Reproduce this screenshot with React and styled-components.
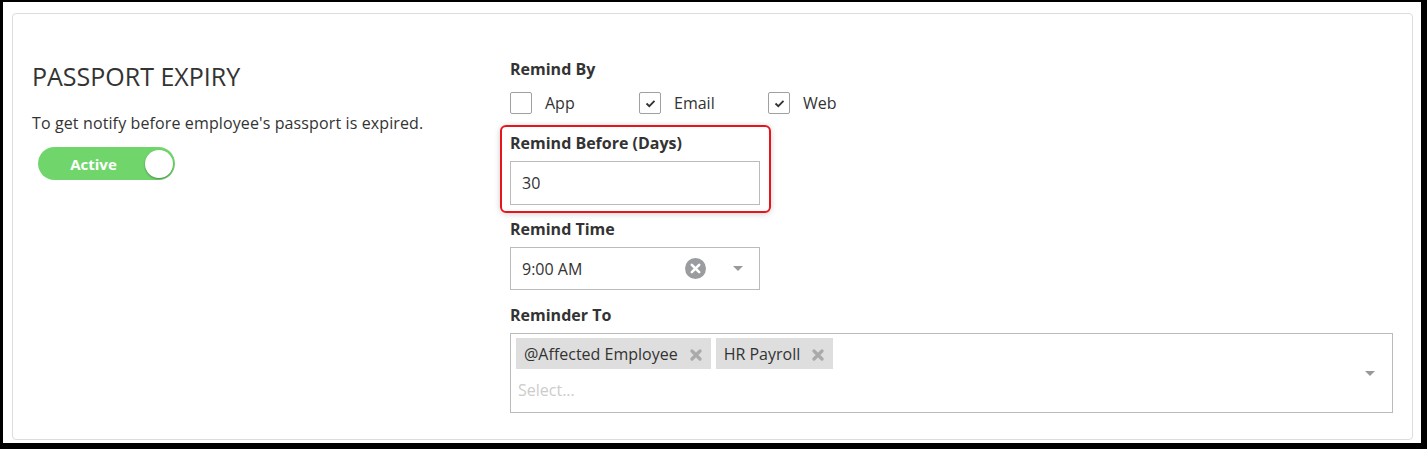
import React from 'react'
import styled, { createGlobalStyle } from 'styled-components'

const GlobalStyle = createGlobalStyle`
  html, body {
    margin: 0;
    padding: 0;
    background: #fff;
  }
  body {
    font-family: 'Open Sans', 'Liberation Sans', sans-serif;
    color: #333;
  }
  * {
    box-sizing: border-box;
  }
`

////////Layout///////////
const Frame = styled.div`
  width: 1427px;
  height: 449px;
  border-style: solid;
  border-color: #000;
  border-width: 2px 6px 6px 3px;
  padding: 11px 8px 3px 9px;
  background: #fff;
`
const Card = styled.section`
  height: 100%;
  border: 1px solid #ddd;
  border-radius: 4px;
  display: grid;
  grid-template-columns: 478px 1fr;
  padding: 44px 19px 0 19px;
`
const Intro = styled.div`
  display: flex;
  flex-direction: column;
  align-items: flex-start;
`
const Title = styled.h2`
  margin: 2px 0 0;
  font-size: 25px;
  font-weight: 400;
  line-height: 32px;
  text-transform: uppercase;
  color: #333;
`
const Description = styled.p`
  margin: 20px 0 0;
  font-size: 16px;
  line-height: 22px;
  letter-spacing: 0.12px;
  color: #333;
`
const Settings = styled.div`
  display: flex;
  flex-direction: column;
  align-items: flex-start;
`
const Field = styled.div`
  display: flex;
  flex-direction: column;
  align-items: flex-start;
  width: ${({ wide }) => (wide ? '100%' : '250px')};
  margin-top: ${({ top }) => top || 0}px;
`
const Highlight = styled.div`
  margin: 11px 0 0 -10px;
  padding: 5px 9px 6px 8px;
  border: 2px solid #e8141b;
  border-radius: 6px;
  box-shadow: 0 1px 6px rgba(0, 0, 0, 0.18);
`
const Label = styled.label`
  display: block;
  font-size: 16px;
  font-weight: 700;
  line-height: 22px;
  color: #333;
`

////////Toggle///////////
const Toggle = styled.div`
  margin: 13px 0 0 6px;
  width: 137px;
  height: 33px;
  border-radius: 17px;
  background: #70d66b;
  display: flex;
  align-items: center;
  padding: 0 2px 0 0;
`
const ToggleText = styled.span`
  flex: 1;
  text-align: center;
  color: #fff;
  font-size: 15px;
  font-weight: 700;
  padding-left: 4px;
`
const Knob = styled.span`
  width: 28px;
  height: 28px;
  border-radius: 50%;
  background: #fff;
  box-shadow: 0 1px 2px rgba(0, 0, 0, 0.35);
`

////////Checkboxes///////////
const CheckRow = styled.div`
  display: flex;
  margin-top: 12px;
`
const CheckItem = styled.label`
  display: flex;
  align-items: center;
  width: 129px;
  font-size: 16px;
  line-height: 22px;
  color: #333;
`
const Box = styled.span`
  width: 22px;
  height: 22px;
  border: 1px solid #a0a0a0;
  border-radius: 2px;
  margin-right: 13px;
  display: flex;
  align-items: center;
  justify-content: center;
  background: #fff;
`

////////Inputs///////////
const Input = styled.div`
  margin-top: 7px;
  width: 250px;
  height: ${({ h }) => h || 44}px;
  border: 1px solid #bbb;
  display: flex;
  align-items: center;
  padding: 0 11px;
  font-size: 16px;
  color: #333;
`
const Select = styled(Input)`
  padding-right: 16px;
`
const SelectValue = styled.span`
  flex: 1;
`
const Caret = styled.span`
  width: 0;
  height: 0;
  border-left: 5px solid transparent;
  border-right: 5px solid transparent;
  border-top: 5px solid #999;
  margin-left: ${({ gap }) => gap || 0}px;
`
const MultiBox = styled.div`
  margin-top: 7px;
  width: 100%;
  height: 80px;
  border: 1px solid #bbb;
  display: flex;
  align-items: center;
  padding: 0 17px 0 5px;
`
const MultiInner = styled.div`
  flex: 1;
  display: flex;
  flex-direction: column;
  align-self: stretch;
  padding-top: 4px;
`
const Chips = styled.div`
  display: flex;
  gap: 5px;
`
const Chip = styled.span`
  display: flex;
  align-items: center;
  height: 31px;
  padding: 0 9px 0 8px;
  background: #dedede;
  font-size: 16px;
  color: #333;
  svg {
    margin-left: 12px;
    margin-top: 2px;
  }
`
const Placeholder = styled.span`
  margin-top: 10px;
  padding-left: 2px;
  font-size: 16px;
  line-height: 22px;
  color: #ccc;
`

const Check = () => (
  <svg width="11" height="9" viewBox="0 0 11 9">
    <path d="M1.5 4.5 L4.3 7.2 L9.5 1.8" fill="none" stroke="#333" strokeWidth="1.8" />
  </svg>
)

const ClearIcon = () => (
  <svg width="21" height="21" viewBox="0 0 21 21">
    <circle cx="10.5" cy="10.5" r="10.5" fill="#9a9ca0" />
    <path d="M6.8 6.8 L14.2 14.2 M14.2 6.8 L6.8 14.2" stroke="#fff" strokeWidth="2.6" strokeLinecap="round" />
  </svg>
)

const RemoveIcon = () => (
  <svg width="12" height="12" viewBox="0 0 12 12">
    <path d="M2 2 L10 10 M10 2 L2 10" stroke="#aaa" strokeWidth="3.2" strokeLinecap="round" />
  </svg>
)

const App = () => {
  const channels = [
    { name: 'App', checked: false },
    { name: 'Email', checked: true },
    { name: 'Web', checked: true },
  ]
  const recipients = ['@Affected Employee', 'HR Payroll']

  return (
    <>
      <GlobalStyle />
      <Frame>
        <Card>
          <Intro>
            <Title>Passport Expiry</Title>
            <Description>To get notify before employee's passport is expired.</Description>
            <Toggle>
              <ToggleText>Active</ToggleText>
              <Knob />
            </Toggle>
          </Intro>

          <Settings>
            <Field>
              <Label>Remind By</Label>
              <CheckRow>
                {channels.map(c => (
                  <CheckItem key={c.name}>
                    <Box>{c.checked && <Check />}</Box>
                    {c.name}
                  </CheckItem>
                ))}
              </CheckRow>
            </Field>

            <Highlight>
              <Field>
                <Label>Remind Before (Days)</Label>
                <Input>30</Input>
              </Field>
            </Highlight>

            <Field top={5}>
              <Label>Remind Time</Label>
              <Select h={43}>
                <SelectValue>9:00 AM</SelectValue>
                <ClearIcon />
                <Caret gap={27} />
              </Select>
            </Field>

            <Field wide top={14}>
              <Label>Reminder To</Label>
              <MultiBox>
                <MultiInner>
                  <Chips>
                    {recipients.map(r => (
                      <Chip key={r}>
                        {r}
                        <RemoveIcon />
                      </Chip>
                    ))}
                  </Chips>
                  <Placeholder>Select...</Placeholder>
                </MultiInner>
                <Caret />
              </MultiBox>
            </Field>
          </Settings>
        </Card>
      </Frame>
    </>
  )
}

export default App
